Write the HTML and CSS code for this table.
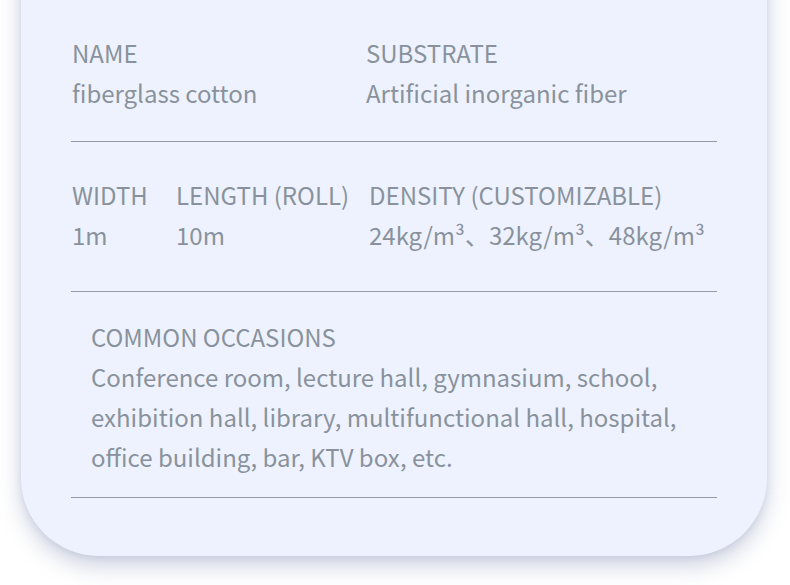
FILE: index.html
```html
<!DOCTYPE html>
<html>
<head>
<meta charset="utf-8">
<link rel="stylesheet" href="styles.css">
</head>
<body>
<div class="page">
  <div class="topline"></div>
  <div class="card">
    <div class="section s1">
      <div class="grid g1">
        <div class="cell"><div class="label">NAME</div><div class="value">fiberglass cotton</div></div>
        <div class="cell"><div class="label">SUBSTRATE</div><div class="value">Artificial inorganic fiber</div></div>
      </div>
    </div>
    <div class="divider"></div>
    <div class="section s2">
      <div class="grid g2">
        <div class="cell"><div class="label">WIDTH</div><div class="value">1m</div></div>
        <div class="cell"><div class="label">LENGTH (ROLL)</div><div class="value">10m</div></div>
        <div class="cell"><div class="label">DENSITY (CUSTOMIZABLE)</div><div class="value">24kg/m³、32kg/m³、48kg/m³</div></div>
      </div>
    </div>
    <div class="divider"></div>
    <div class="section s3">
      <div class="label wide">COMMON OCCASIONS</div>
      <div class="value wide">Conference room, lecture hall, gymnasium, school,<br>exhibition hall, library, multifunctional hall, hospital,<br>office building, bar, KTV box, etc.</div>
    </div>
    <div class="divider"></div>
    <div class="bottom"></div>
  </div>
</div>
</body>
</html>
```

FILE: styles.css
```css
html, body {
  margin: 0;
  padding: 0;
  background: #ffffff;
}
body {
  width: 790px;
  height: 585px;
  overflow: hidden;
  font-family: "Noto Sans CJK SC", "Noto Sans", sans-serif;
  color: #89929c;
}
.page {
  position: relative;
  padding-left: 21px;
}
.topline {
  position: absolute;
  left: 96px;
  top: 2px;
  width: 623px;
  height: 1px;
  background: #e3e7f3;
  z-index: 2;
}
.card {
  width: 746px;
  margin-top: -40px;
  padding-top: 73px;
  background: #eef2fe;
  border-radius: 0 0 78px 78px;
  box-shadow: 0 10px 22px rgba(130, 140, 180, 0.38), 0 2px 6px rgba(160, 170, 200, 0.25);
}
.section {
  padding: 0 50px 0 51px;
}
.grid {
  display: flex;
}
.label, .value {
  font-size: 24px;
  line-height: 40px;
  white-space: nowrap;
}
.g1 .cell:first-child {
  width: 294px;
}
.g2 .cell:nth-child(1) {
  width: 104px;
}
.g2 .cell:nth-child(2) {
  width: 193px;
}
.s1 {
  padding-bottom: 28px;
}
.s2 {
  padding-top: 33px;
  padding-bottom: 36px;
}
.s3 {
  padding-top: 25px;
  padding-left: 70px;
  padding-bottom: 20px;
}
.divider {
  margin: 0 50px;
  height: 1px;
  background: #939ba6;
}
.bottom {
  height: 58px;
}
```
